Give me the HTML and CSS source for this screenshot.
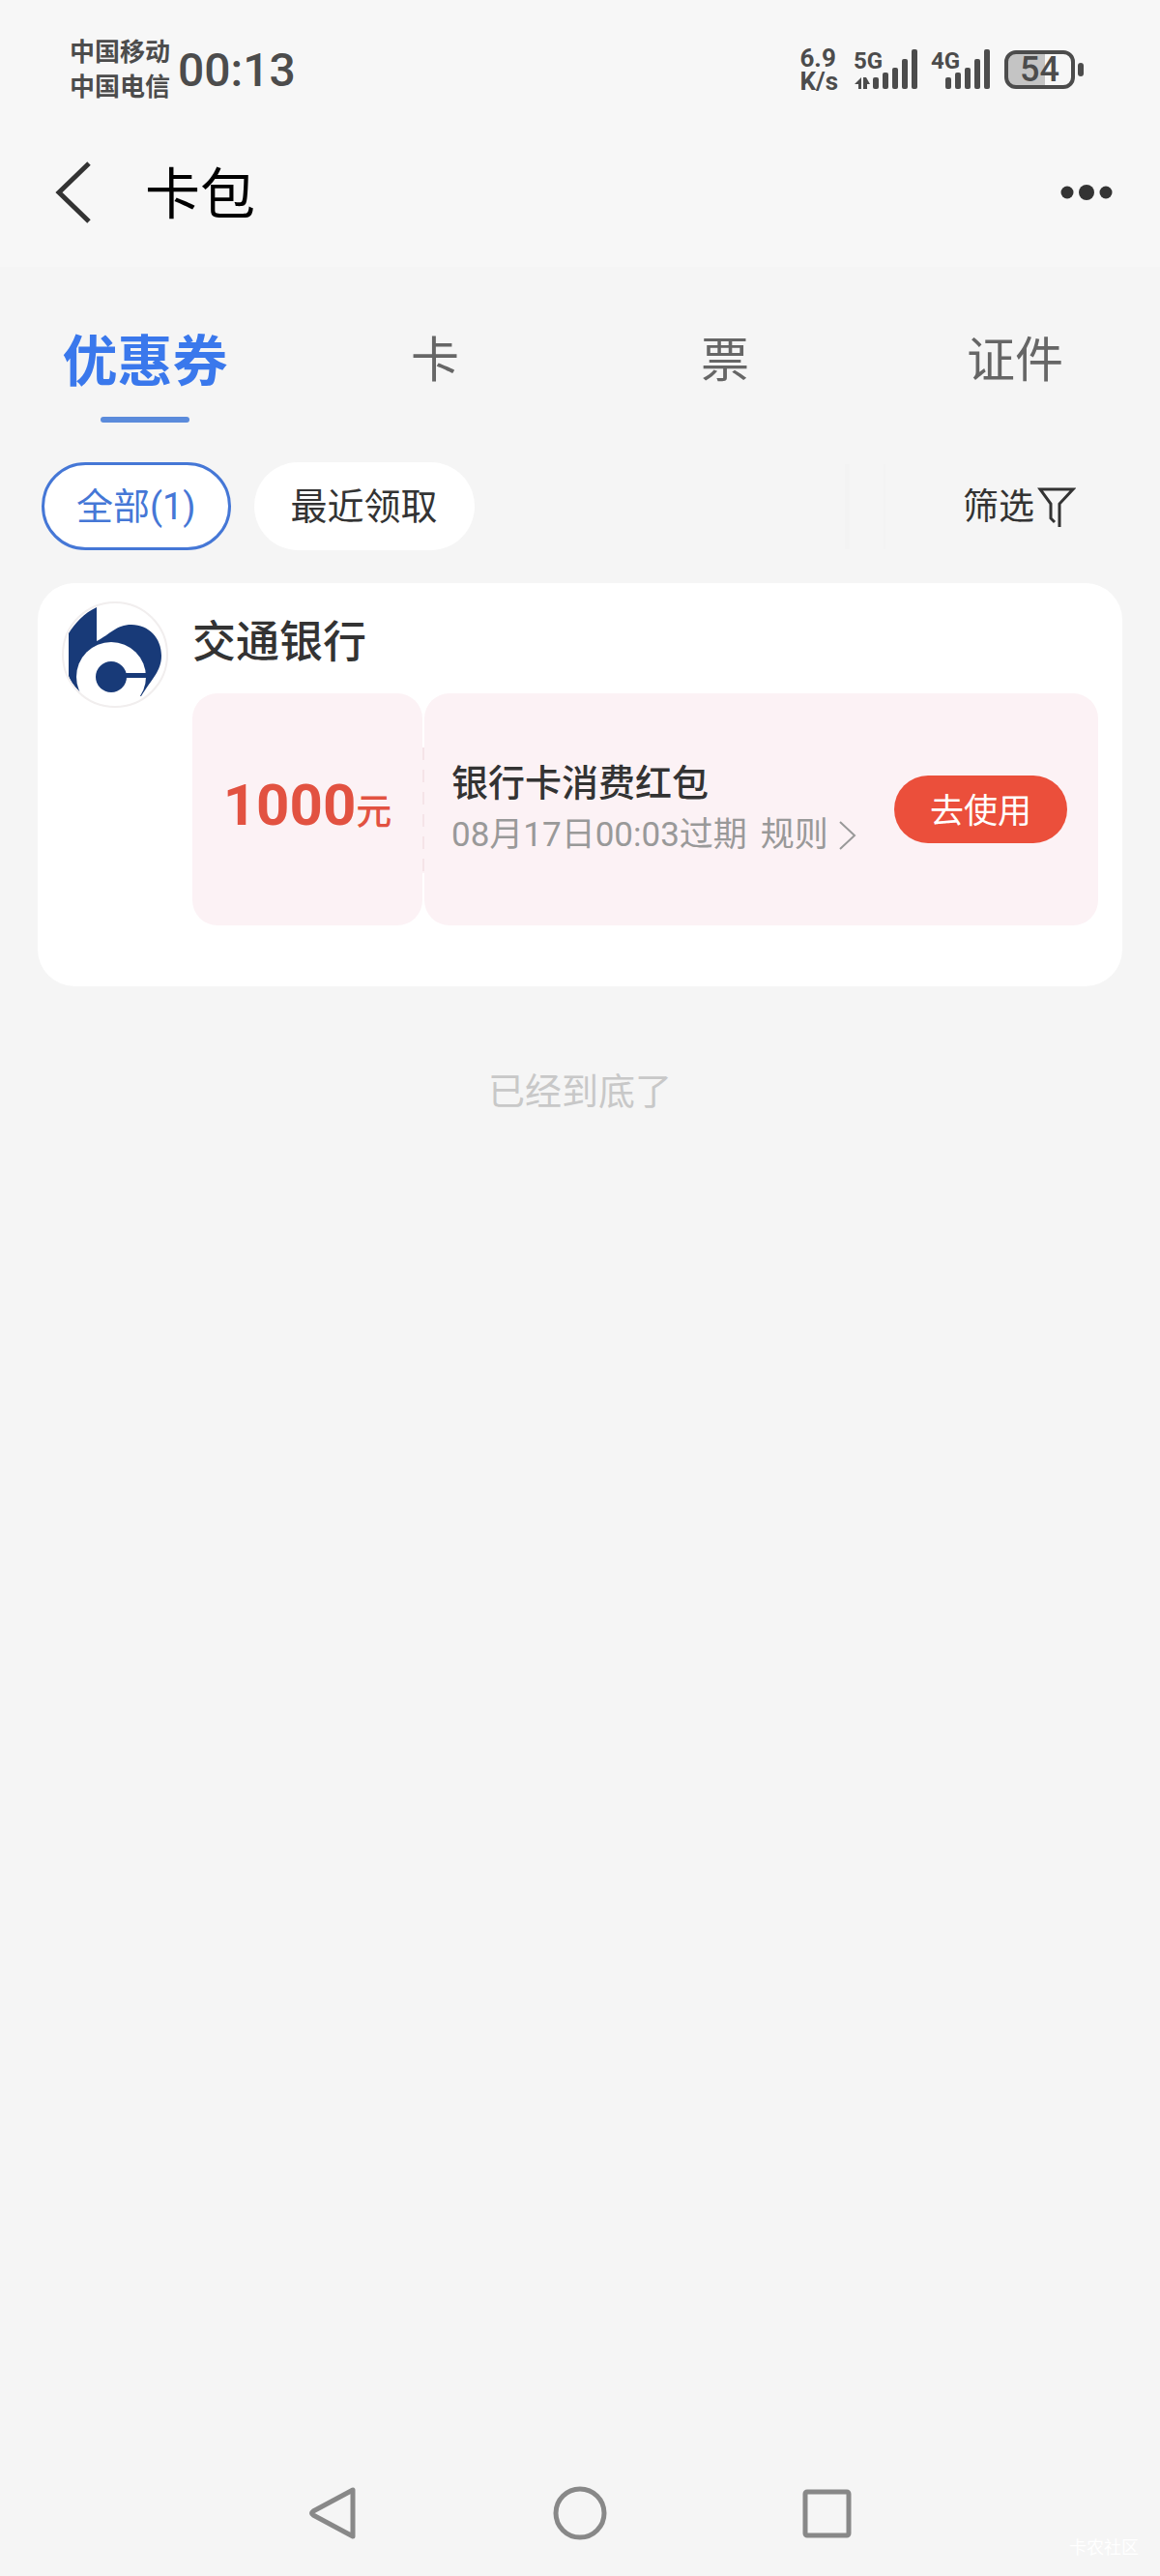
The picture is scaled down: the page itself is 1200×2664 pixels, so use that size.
FILE: index.html
```
<!DOCTYPE html>
<html lang="zh-CN">
<head>
    <meta charset="UTF-8">
    <meta name="viewport" content="width=device-width, initial-scale=1.0">
    <title>卡包</title>
    <link rel="stylesheet" href="styles.css">
</head>
<body>
    <header>
        <div class="status-bar">
            <div class="carriers">
                <span>中国移动</span>
                <span>中国电信</span>
            </div>
            <time class="clock">00:13</time>
            <div class="status-icons">
                <div class="speed">
                    <span>6.9</span>
                    <span>K/s</span>
                </div>
                <svg class="signal" width="68" height="44" viewBox="0 0 68 44">
                    <text x="0" y="21">5G</text>
                    <path d="M8 30v12h-3v-5h-4zM10 30h3l4 7h-3v5h-4z"/>
                    <rect x="20" y="30" width="6" height="12" rx="2"/>
                    <rect x="30" y="25" width="6" height="17" rx="2"/>
                    <rect x="40" y="20" width="6" height="22" rx="2"/>
                    <rect x="50" y="11" width="6" height="31" rx="2"/>
                    <rect x="60" y="1" width="6" height="41" rx="2"/>
                </svg>
                <svg class="signal" width="64" height="44" viewBox="0 0 64 44">
                    <text x="0" y="21">4G</text>
                    <rect x="15" y="30" width="6" height="12" rx="2"/>
                    <rect x="25" y="25" width="6" height="17" rx="2"/>
                    <rect x="35" y="20" width="6" height="22" rx="2"/>
                    <rect x="45" y="11" width="6" height="31" rx="2"/>
                    <rect x="55" y="1" width="6" height="41" rx="2"/>
                </svg>
                <div class="battery"><span>54</span></div>
            </div>
        </div>
        <div class="title-bar">
            <button class="icon-button" aria-label="返回">
                <svg width="40" height="64" viewBox="0 0 40 64">
                    <path d="M36 2 L5 32 L36 62" fill="none" stroke="#333" stroke-width="5"/>
                </svg>
            </button>
            <h1>卡包</h1>
            <button class="icon-button more" aria-label="更多">
                <svg width="56" height="20" viewBox="0 0 56 20" fill="#333">
                    <circle cx="8" cy="10" r="6.5"/>
                    <circle cx="28" cy="10" r="8"/>
                    <circle cx="48" cy="10" r="6.5"/>
                </svg>
            </button>
        </div>
    </header>

    <main>
        <nav class="tabs">
            <button class="tab active">优惠券</button>
            <button class="tab">卡</button>
            <button class="tab">票</button>
            <button class="tab">证件</button>
        </nav>

        <div class="filters">
            <button class="chip selected">全部(1)</button>
            <button class="chip">最近领取</button>
            <span class="fade"></span>
            <button class="filter-button">
                <span>筛选</span>
                <svg width="40" height="44" viewBox="0 0 40 44">
                    <path d="M18 38 L14 34 V19 L3 4 H37 L23 19 V43" fill="none" stroke="#333" stroke-width="3"/>
                </svg>
            </button>
        </div>

        <section class="card">
            <svg class="bank-logo" width="110" height="110" viewBox="0 0 110 110">
                <path fill="#183a78" d="M36 6 V41 C50 34 56 24 72 24 C90 24 103 38 103 56 C103 72 93 80 82 98 L18 93 C12 87 9 82 7 77 V33 C13 23 23 12 36 6 Z"/>
                <circle cx="51" cy="78" r="36" fill="#fff"/>
                <circle cx="51" cy="78" r="16" fill="#183a78"/>
                <path fill="#183a78" d="M64 74 H90 V79 H64 Z"/>
                <circle cx="55" cy="55" r="54" fill="none" stroke="#f1eeee" stroke-width="2"/>
            </svg>
            <div class="card-body">
                <h2>交通银行</h2>
                <div class="coupon">
                    <p class="amount"><span>1000<small>元</small></span></p>
                    <div class="details">
                        <div class="info">
                            <h3>银行卡消费红包</h3>
                            <p class="expiry">
                                <span>08月17日00:03过期</span>
                                <a href="#">规则
                                    <svg width="20" height="32" viewBox="0 0 20 32">
                                        <path d="M2 2 L17 16 L2 30" fill="none" stroke="#999" stroke-width="2"/>
                                    </svg>
                                </a>
                            </p>
                        </div>
                        <button class="use-button">去使用</button>
                    </div>
                </div>
            </div>
        </section>

        <p class="list-end">已经到底了</p>
    </main>

    <footer>
        <button class="icon-button" aria-label="返回">
            <svg width="56" height="56" viewBox="0 0 56 56">
                <path d="M49 4 V52 L8 30 Q5 28 8 26 Z"/>
            </svg>
        </button>
        <button class="icon-button" aria-label="主页">
            <svg width="56" height="56" viewBox="0 0 56 56">
                <circle cx="28" cy="28" r="25"/>
            </svg>
        </button>
        <button class="icon-button" aria-label="最近任务">
            <svg width="56" height="56" viewBox="0 0 56 56">
                <rect x="5" y="6" width="45" height="45" rx="2"/>
            </svg>
        </button>
        <span class="watermark">卡农社区</span>
    </footer>
</body>
</html>
```
FILE: styles.css
```
/* Global Styles */
* {
    box-sizing: border-box;
}
body {
    display: flex;
    flex-direction: column;
    min-height: 100vh;
    margin: 0;
    background: #f5f5f5;
    color: #333;
    font-family: Roboto, 'Noto Sans CJK SC', sans-serif;
}
h1, h2, h3, p {
    margin: 0;
}
button {
    padding: 0;
    border: 0;
    background: none;
    color: inherit;
    font-family: inherit;
}
svg {
    display: block;
}

/* Header */
header {
    background: #f7f7f7;
}
.status-bar {
    display: flex;
    align-items: center;
    height: 144px;
    padding: 0 80px 0 72px;
    color: #4c4c4c;
}
.carriers {
    display: flex;
    flex-direction: column;
    font-size: 26px;
    font-weight: 700;
    line-height: 36px;
}
.clock {
    margin-left: 8px;
    font-size: 48px;
    font-weight: 500;
}
.status-icons {
    display: flex;
    align-items: center;
    margin-left: auto;
}
.speed {
    display: flex;
    flex-direction: column;
    margin-right: 16px;
    font-size: 26px;
    font-weight: 700;
    line-height: 24px;
}
.signal {
    margin-right: 12px;
    fill: #4c4c4c;
    font-size: 24px;
    font-weight: 700;
}
.battery {
    display: flex;
    align-items: center;
    justify-content: center;
    position: relative;
    width: 73px;
    height: 40px;
    margin-right: 8px;
    border: 4px solid #4c4c4c;
    border-radius: 12px;
    background: linear-gradient(to right, #c4c4c4 58%, #f7f7f7 58%);
    font-size: 36px;
    font-weight: 500;
}
.battery::after {
    content: "";
    position: absolute;
    right: -13px;
    width: 6px;
    height: 14px;
    border-radius: 3px;
    background: #4c4c4c;
}
.title-bar {
    display: flex;
    align-items: center;
    height: 132px;
    padding: 0 48px 22px 56px;
}
h1 {
    margin-left: 54px;
    padding-top: 6px;
    color: #000;
    font-size: 57px;
    font-weight: 400;
    line-height: 80px;
}
.more {
    margin-left: auto;
}

/* Tabs */
.tabs {
    display: grid;
    grid-template-columns: repeat(4, 1fr);
    height: 202px;
    padding-top: 52px;
}
.tab {
    position: relative;
    height: 80px;
    color: #666;
    font-size: 50px;
}
.tab.active {
    color: #3a78ec;
    font-size: 57px;
    font-weight: 700;
}
.tab.active::after {
    content: "";
    position: absolute;
    left: 50%;
    bottom: -29px;
    width: 92px;
    height: 6px;
    margin-left: -46px;
    border-radius: 3px;
    background: #5b8bdb;
}

/* Filters */
.filters {
    display: flex;
    align-items: center;
    padding: 0 87px 0 43px;
}
.chip {
    height: 91px;
    margin-right: 24px;
    padding: 0 38px 6px;
    border-radius: 46px;
    background: #fff;
    font-size: 38px;
}
.chip.selected {
    padding: 0 33px 6px;
    border: 3px solid #4577d6;
    color: #4577d6;
}
.fade {
    width: 42px;
    height: 88px;
    margin-left: auto;
    border: solid #f3f3f3;
    border-width: 0 2px 0 5px;
}
.filter-button {
    display: flex;
    align-items: center;
    gap: 3px;
    margin-left: 80px;
    font-size: 37px;
}
.filter-button span {
    padding-bottom: 6px;
}

/* Coupon card */
.card {
    display: flex;
    gap: 25px;
    margin: 34px 39px 0;
    padding: 19px 25px 63px;
    border-radius: 38px;
    background: #fff;
}
.bank-logo {
    flex: none;
}
.card-body {
    flex: 1;
}
h2 {
    padding: 3px 0 12px;
    font-size: 45px;
    font-weight: 500;
    line-height: 80px;
}
.coupon {
    display: flex;
    gap: 2px;
    min-height: 240px;
}
.amount, .details {
    border-radius: 26px;
    background: #fcf2f5;
}
.amount {
    display: flex;
    align-items: center;
    justify-content: center;
    width: 238px;
    color: #e25241;
    font-size: 60px;
    font-weight: 700;
    line-height: 80px;
}
.amount small {
    font-size: 37px;
    font-weight: 500;
}
.details {
    display: flex;
    flex: 1;
    align-items: center;
    justify-content: space-between;
    position: relative;
    padding: 0 32px 0 28px;
}
/* perforated edge between the two halves */
.details::before {
    content: "";
    position: absolute;
    left: -2px;
    top: 56px;
    width: 2px;
    height: 130px;
    background: repeating-linear-gradient(#f5e4e8 0 13px, #fcf2f5 13px 23px);
}
h3 {
    font-size: 38px;
    font-weight: 500;
    line-height: 54px;
}
.expiry {
    display: flex;
    gap: 14px;
    color: #999;
    font-size: 35px;
    line-height: 54px;
}
.expiry a {
    display: flex;
    align-items: center;
    gap: 10px;
    color: inherit;
    text-decoration: none;
}
.use-button {
    width: 179px;
    height: 70px;
    padding-bottom: 4px;
    border-radius: 35px;
    background: #eb4f3b;
    color: #fff;
    font-size: 35px;
}
.list-end {
    padding: 82px 0;
    color: #c8c8c8;
    font-size: 38px;
    line-height: 54px;
    text-align: center;
}

/* System navigation */
footer {
    display: grid;
    grid-template-columns: repeat(3, 1fr);
    justify-items: center;
    position: relative;
    margin-top: auto;
    padding: 0 18% 37px;
}
footer svg {
    fill: none;
    stroke: #888;
    stroke-width: 5;
    stroke-linejoin: round;
}
.watermark {
    position: absolute;
    right: 22px;
    bottom: 18px;
    color: #fff;
    font-size: 18px;
}
```
